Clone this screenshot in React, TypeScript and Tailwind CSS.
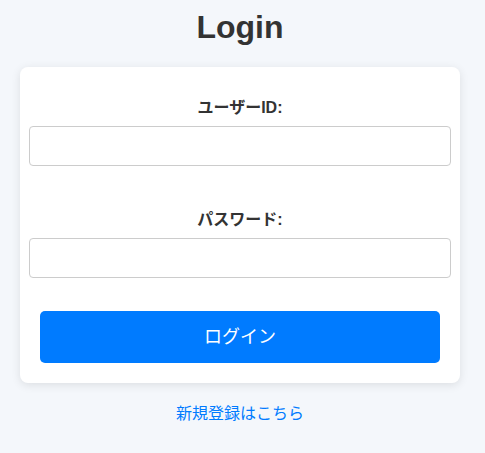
export default function App() {
  return (
    <div
      className="min-h-[453px] bg-[#f4f7fb] text-[#333]"
      style={{ fontFamily: '"Liberation Sans", "Noto Sans CJK JP", sans-serif' }}
    >
      <div className="ml-5 w-[440px]">
        <h1 className="pt-[9px] text-center text-[32px] font-bold leading-[37px]">Login</h1>

        <form
          className="mt-[21px] rounded-lg bg-white px-[9px] pb-5 pt-[29px] shadow-[0_2px_10px_rgba(0,0,0,0.1)]"
          onSubmit={(e) => e.preventDefault()}
        >
          <label className="block text-center text-base font-bold leading-6">ユーザーID:</label>
          <input
            type="text"
            className="mt-[6px] block h-[40px] w-full rounded border border-[#ccc] px-2.5 outline-none"
          />

          <label className="mt-[42px] block text-center text-base font-bold leading-6">パスワード:</label>
          <input
            type="password"
            className="mt-[6px] block h-[40px] w-full rounded border border-[#ccc] px-2.5 outline-none"
          />

          <div className="mt-[33px] px-[11px]">
            <button
              type="submit"
              className="h-[52px] w-full rounded-[5px] bg-[#007bff] text-lg text-white"
            >
              ログイン
            </button>
          </div>
        </form>

        <div className="mt-[19px] text-center">
          <a href="#" className="text-base leading-6 text-[#007bff]">
            新規登録はこちら
          </a>
        </div>
      </div>
    </div>
  )
}
